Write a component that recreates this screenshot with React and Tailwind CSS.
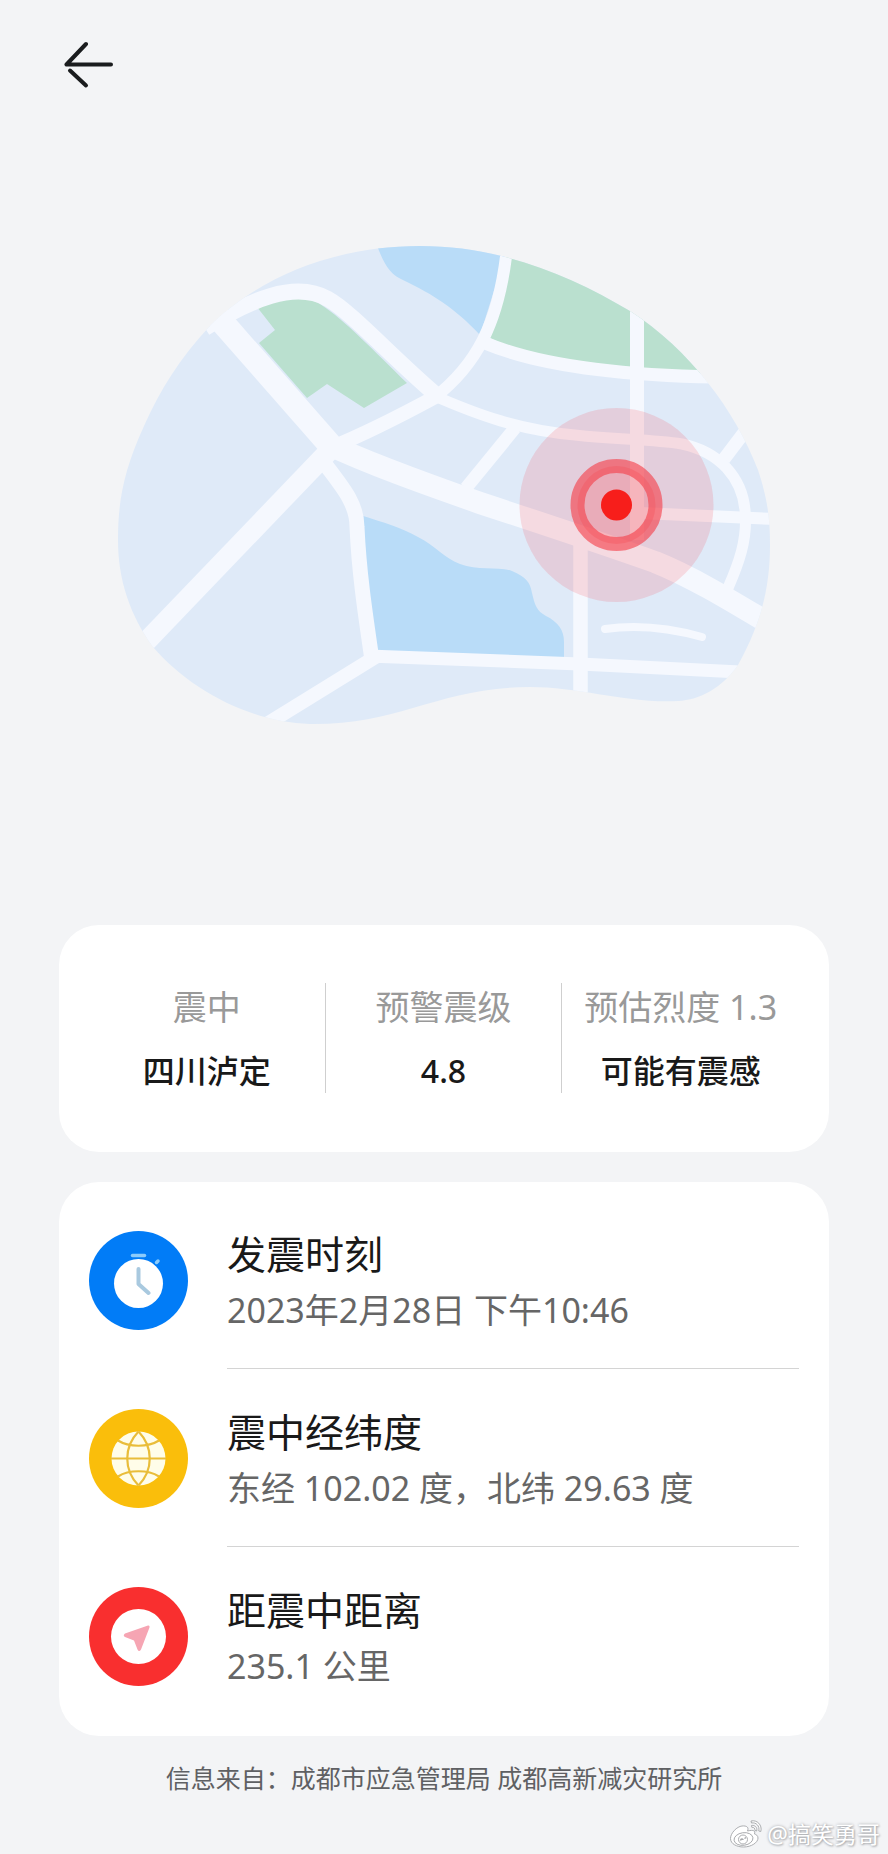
import React from 'react';

const RESUMO = [
  { label: '震中', value: '四川泸定' },
  { label: '预警震级', value: '4.8' },
  { label: '预估烈度 1.3', value: '可能有震感' },
];

const ClockIcon = () => (
  <svg viewBox="0 0 99 99" className="size-[99px] shrink-0" aria-hidden="true">
    <circle cx="49.5" cy="49.5" r="49.5" fill="#017cf7" />
    <path d="M43.5 24.5H55.5" stroke="#8ccbfb" strokeWidth="3.5" strokeLinecap="round" />
    <path d="M67.5 31.5L69 30" stroke="#8ccbfb" strokeWidth="3.5" strokeLinecap="round" />
    <circle cx="49.5" cy="52.5" r="24.5" fill="#fff" />
    <path d="M49.5 38V53L59.5 62" stroke="#a9c9df" strokeWidth="4" strokeLinecap="round" strokeLinejoin="round" fill="none" />
  </svg>
);

const GlobeIcon = () => (
  <svg viewBox="0 0 99 99" className="size-[99px] shrink-0" aria-hidden="true">
    <circle cx="49.5" cy="49.5" r="49.5" fill="#fabe0b" />
    <circle cx="49.5" cy="49.5" r="27" fill="#fffde9" />
    <g fill="none" stroke="#e9bd3a" strokeWidth="2.2">
      <path d="M22 49.5H77" />
      <path d="M49.5 22.5C34.5 38 34.5 61 49.5 76.5" />
      <path d="M49.5 22.5C64.5 38 64.5 61 49.5 76.5" />
      <path d="M29 31.5C40 38.5 59 38.5 70 31.5" />
      <path d="M29 67.5C40 60.5 59 60.5 70 67.5" />
    </g>
  </svg>
);

const DistanceIcon = () => (
  <svg viewBox="0 0 99 99" className="size-[99px] shrink-0" aria-hidden="true">
    <circle cx="49.5" cy="49.5" r="49.5" fill="#f92f2f" />
    <circle cx="49.5" cy="49.5" r="27.5" fill="#fff" />
    <path d="M59 38.500L36 46.500Q33.500 48.500 36 50L45 53.500L48.500 62.500Q50 65.500 52 62.500L60.500 40.500Q61 38 59 38.500Z" fill="#f6a5b3" />
  </svg>
);

const DETALHES = [
  { Icon: ClockIcon, title: '发震时刻', text: '2023年2月28日 下午10:46' },
  { Icon: GlobeIcon, title: '震中经纬度', text: '东经 102.02 度，北纬 29.63 度' },
  { Icon: DistanceIcon, title: '距震中距离', text: '235.1 公里' },
];

const EpicenterMap = () => (
  <svg viewBox="118 244 652 484" className="block w-full" role="img" aria-label="震中">
    <defs>
      <clipPath id="land">
        <path d="M118 540C118 500 124 470 144 426C160 390 180 358 209 327C255 280 330 246 420 246C500 246 570 275 630 311C690 350 735 410 758 470C768 500 770 520 770 545C770 590 760 625 738 665C722 688 700 700 678 701C630 704 580 687 530 687C440 687 400 725 310 724C250 722 190 690 153 647C130 615 118 580 118 540Z" />
      </clipPath>
    </defs>

    <g clipPath="url(#land)">
      <rect x="118" y="244" width="652" height="484" fill="#dfeaf8" />

      {/* água */}
      <path d="M375 240C383 262 388 274 405 281C432 294 455 308 480 335L510 240Z" fill="#b9dcf8" />
      <path d="M360 515C385 523 400 527 418 537C436 546 444 558 460 564C478 571 498 566 512 571C526 577 530 582 532 593C535 606 537 611 546 616C558 622 564 630 564 642V660H370Z" fill="#b9dcf8" />

      {/* parques */}
      <path d="M257 307C280 296 303 294 320 304C345 320 375 352 407 383L364 408L327 384L307 398L259 343L275 330Z" fill="#bae0cf" />
      <path d="M508 240L490 338C530 358 600 370 715 374V240Z" fill="#bae0cf" />

      {/* ruas */}
      <g fill="none" stroke="#f5f8fe">
        <path d="M216 315L331 446" strokeWidth="24" />
        <path d="M325 443C370 464 420 482 480 503C550 526 610 546 655 562C690 576 725 597 775 627" strokeWidth="22" />
        <path d="M205 328C250 300 295 280 328 299C350 311 392 357 434 393" strokeWidth="16" />
        <path d="M330 448C365 434 400 416 437 396" strokeWidth="14" />
        <path d="M434 398C475 366 499 325 507 248" strokeWidth="12" />
        <path d="M430 394C480 416 520 430 575 435C620 440 650 439 682 444C720 452 742 478 745 510C748 540 738 565 728 588" strokeWidth="11" />
        <path d="M485 343C530 362 600 375 715 377" strokeWidth="13" />
        <path d="M637 300V540" strokeWidth="14" />
        <path d="M515 428L466 488" strokeWidth="13" />
        <path d="M746 430L724 459" strokeWidth="13" />
        <path d="M640 513L775 519" strokeWidth="12" />
        <path d="M330 450L141 647" strokeWidth="20" />
        <path d="M325 464C345 490 357 505 357 527C359 572 365 612 372 660" strokeWidth="15" />
        <path d="M377 656L262 727" strokeWidth="14" />
        <path d="M368 656L580 664L760 673" strokeWidth="13" />
        <path d="M580.5 540V700" strokeWidth="14.5" />
        <path d="M605 629C640 624 670 628 702 637" strokeWidth="8" strokeLinecap="round" />
      </g>
    </g>

    {/* epicentro */}
    <circle cx="616.5" cy="505" r="97" fill="#f83c4c" fillOpacity="0.16" />
    <circle cx="616.5" cy="505" r="39" fill="#fa4650" fillOpacity="0.25" />
    <circle cx="616.5" cy="505" r="39" fill="none" stroke="#f53a45" strokeOpacity="0.6" strokeWidth="14" />
    <circle cx="616.5" cy="505" r="15.5" fill="#f71e1b" />
  </svg>
);

const WeiboMark = () => (
  <svg viewBox="0 0 34 30" className="h-[30px] w-[34px]" fill="#fff" stroke="#a3a5a8" strokeWidth="0.9" aria-hidden="true">
    <path d="M13 7C8 7.500 1.500 14 1.500 19.500C1.500 25 8 28 14.500 28C22.500 28 29 23.500 29 19C29 16.500 27 15.500 25.500 15C26.500 12 25 10.500 18.500 12C20 8.500 18 6.500 13 7Z" />
    <ellipse cx="14.5" cy="20" rx="9.5" ry="6.3" transform="rotate(-8 14.5 20)" />
    <circle cx="14" cy="20.5" r="4.5" />
    <path d="M11.5 21.5C12 19.5 14 19.5 14 21M15.5 19.5L17 18.5" fill="none" strokeWidth="1.4" />
    <path d="M22 2C28 0.500 33.500 6 31.800 12.500L29.800 12C31 7 27 3 22.500 4Z" />
    <path d="M22.500 6.500C26 6 28.500 8.500 27.700 12L25.900 11.500C26.300 9.500 25 8 22.800 8.300Z" />
  </svg>
);

const App = () => {
  return (
    <div className="flex min-h-screen flex-col bg-[#f3f4f6] font-['Noto_Sans','Noto_Sans_CJK_SC',sans-serif] text-[#191919]" lang="zh-CN">
      <header className="px-[64px] pt-[40px]">
        <button type="button" aria-label="返回" className="block">
          <svg viewBox="0 0 52 50" className="h-[50px] w-[52px]" fill="none" stroke="#1a1c1e" strokeWidth="4" strokeLinecap="round">
            <path d="M22 4L2.500 24.500H47" strokeLinejoin="round" />
            <path d="M6 30.500L22 45.500" />
          </svg>
        </button>
      </header>

      <main className="px-[59px]">
        <div className="px-[59px] pt-[154px] pb-[197px]">
          <EpicenterMap />
        </div>

        {/* RESUMO */}
        <dl className="grid grid-cols-3 divide-x divide-[#cfcfcf] rounded-[40px] bg-white px-[30px] pt-[58px] pb-[59px]">
          {RESUMO.map((item) => (
            <div key={item.label} className="flex h-[110px] flex-col items-center whitespace-nowrap">
              <dt className="text-[34px] leading-[48px] text-[#999999]">{item.label}</dt>
              <dd className="mt-[18px] text-[32px] leading-[44px] font-medium">{item.value}</dd>
            </div>
          ))}
        </dl>

        {/* DETALHES */}
        <ul className="mt-[30px] rounded-[40px] bg-white px-[30px] pt-[9px] pb-[11px]">
          {DETALHES.map(({ Icon, title, text }, i) => (
            <li key={title} className="flex h-[178px] items-center gap-[39px]">
              <Icon />
              <div className={`flex h-full grow flex-col justify-center pt-1 ${i < DETALHES.length - 1 ? 'border-b border-[#d4d4d4]' : ''}`}>
                <h2 className="text-[39px] leading-[56px]">{title}</h2>
                <p className="text-[34px] leading-[56px] text-[#666666]">{text}</p>
              </div>
            </li>
          ))}
        </ul>
      </main>

      <footer className="flex grow flex-col justify-between">
        <p className="pt-[24px] text-center text-[25px] leading-[36px] text-[#5f6063]">信息来自：成都市应急管理局 成都高新减灾研究所</p>
        <div className="flex items-center justify-end gap-1 pr-2 pb-1">
          <WeiboMark />
          <span className="text-[23px] leading-[32px] text-white [text-shadow:0_0_3px_#a0a2a6,1px_1px_2px_#b4b6ba]">@搞笑勇哥</span>
        </div>
      </footer>
    </div>
  );
};

export default App;
